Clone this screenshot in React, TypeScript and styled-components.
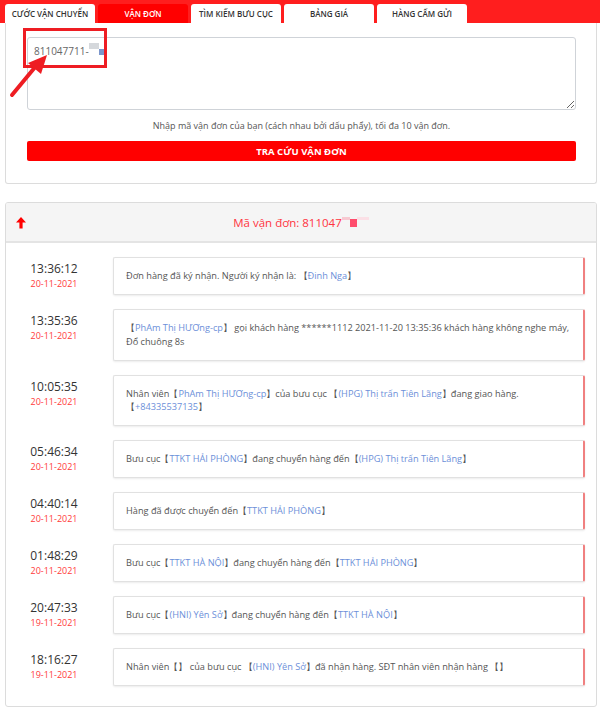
import styled, { createGlobalStyle } from 'styled-components'

const GlobalStyle = createGlobalStyle`
    body {
        margin: 0;
        background: #fff;
        font-family: 'Open Sans', 'Liberation Sans', sans-serif;
        color: #444;
    }
`

type Piece = string | { link: string }

interface TrackEvent {
    time: string
    date: string
    text: Piece[]
}

const TABS = ['Cước vận chuyển', 'Vận đơn', 'Tìm kiếm bưu cục', 'Bảng giá', 'Hàng cấm gửi']

const EVENTS: TrackEvent[] = [
    {
        time: '13:36:12',
        date: '20-11-2021',
        text: ['Đơn hàng đã ký nhận. Người ký nhận là: 【', { link: 'Đinh Nga' }, '】'],
    },
    {
        time: '13:35:36',
        date: '20-11-2021',
        text: [
            '【',
            { link: 'PhAm Thị HƯƠng-cp' },
            '】 gọi khách hàng ******1112 2021-11-20 13:35:36 khách hàng không nghe máy, Đổ chuông 8s',
        ],
    },
    {
        time: '10:05:35',
        date: '20-11-2021',
        text: [
            'Nhân viên【',
            { link: 'PhAm Thị HƯƠng-cp' },
            '】của bưu cục 【',
            { link: '(HPG) Thị trấn Tiên Lãng' },
            '】đang giao hàng. 【',
            { link: '+84335537135' },
            '】',
        ],
    },
    {
        time: '05:46:34',
        date: '20-11-2021',
        text: ['Bưu cục【', { link: 'TTKT HẢI PHÒNG' }, '】đang chuyển hàng đến【', { link: '(HPG) Thị trấn Tiên Lãng' }, '】'],
    },
    {
        time: '04:40:14',
        date: '20-11-2021',
        text: ['Hàng đã được chuyển đến【', { link: 'TTKT HẢI PHÒNG' }, '】'],
    },
    {
        time: '01:48:29',
        date: '20-11-2021',
        text: ['Bưu cục【', { link: 'TTKT HÀ NỘI' }, '】đang chuyển hàng đến【', { link: 'TTKT HẢI PHÒNG' }, '】'],
    },
    {
        time: '20:47:33',
        date: '19-11-2021',
        text: ['Bưu cục【', { link: '(HNI) Yên Sở' }, '】đang chuyển hàng đến【', { link: 'TTKT HÀ NỘI' }, '】'],
    },
    {
        time: '18:16:27',
        date: '19-11-2021',
        text: ['Nhân viên【】 của bưu cục 【', { link: '(HNI) Yên Sở' }, '】đã nhận hàng. SĐT nhân viên nhận hàng 【】'],
    },
]

const Page = styled.div`
    position: relative;
    width: 600px;
    padding-bottom: 10px;
`

const TabBar = styled.div`
    height: 23px;
    background: #ff1e1e;
    display: flex;
    align-items: flex-end;
    gap: 3px;
    padding-left: 5px;
    box-sizing: border-box;
`

const Tab = styled.div<{ $active?: boolean }>`
    width: 90px;
    height: 19px;
    border-radius: 3px 3px 0 0;
    background: ${(p) => (p.$active ? '#ff0000' : '#fff')};
    color: ${(p) => (p.$active ? '#fff' : '#333')};
    font-size: 8px;
    font-weight: 600;
    text-transform: uppercase;
    display: flex;
    align-items: center;
    justify-content: center;
`

const SearchPanel = styled.div`
    margin: 0 3px 0 5px;
    border: 1px solid #dcdcdc;
    border-top: none;
    border-radius: 0 0 3px 3px;
    padding: 14px 20px 22px 21px;
`

const InputBox = styled.div`
    height: 73px;
    box-sizing: border-box;
    border: 1px solid #cfd3d8;
    border-radius: 3px;
    padding: 5px 6px;
    font-size: 10px;
    color: #666;
    resize: vertical;
    overflow: auto;
`

const Redact = styled.span<{ $color: string; $w: number; $h: number; $lift?: number }>`
    display: inline-block;
    width: ${(p) => p.$w}px;
    height: ${(p) => p.$h}px;
    background: ${(p) => p.$color};
    vertical-align: ${(p) => p.$lift ?? 0}px;
`

const Hint = styled.div`
    text-align: center;
    font-size: 9px;
    line-height: 12px;
    color: #555;
    margin: 10px 0 9px;
`

const SearchButton = styled.button`
    display: block;
    width: 100%;
    height: 20px;
    border: none;
    border-radius: 2px;
    background: #ff0000;
    color: #fff;
    font-family: inherit;
    font-size: 9.5px;
    font-weight: 700;
    text-transform: uppercase;
`

const Highlight = styled.div`
    position: absolute;
    left: 23px;
    top: 28px;
    width: 84px;
    height: 40px;
    box-sizing: border-box;
    border: 3px solid #ee1d23;
`

const Pointer = styled.svg`
    position: absolute;
    left: 8px;
    top: 52px;
`

const TrackPanel = styled.div`
    margin: 18px 3px 0 5px;
    border: 1px solid #dcdcdc;
    border-radius: 3px;
    overflow: hidden;
`

const TrackHeader = styled.div`
    height: 40px;
    box-sizing: border-box;
    background: #f5f5f5;
    border-bottom: 2px solid #e4e4e4;
    display: grid;
    grid-template-columns: 30px 1fr 30px;
    align-items: center;
`

const UpArrow = styled.svg`
    justify-self: center;
`

const TrackTitle = styled.div`
    text-align: center;
    font-size: 11.5px;
    color: #ff3340;
`

const Timeline = styled.div`
    display: flex;
    flex-direction: column;
    gap: 14px;
    padding: 14px 11px 20px 0;
`

const EventRow = styled.div`
    display: grid;
    grid-template-columns: 96px 1fr;
    column-gap: 11px;
    align-items: start;
`

const When = styled.div`
    text-align: center;
    padding-top: 4px;
`

const Time = styled.div`
    font-size: 12px;
    font-weight: 500;
    color: #333;
    line-height: 15px;
`

const DateText = styled.div`
    font-size: 9px;
    color: #ff3b3b;
    margin-top: 1px;
`

const Card = styled.div`
    border: 1px solid #e1e1e1;
    border-right: 2px solid #f08080;
    border-radius: 2px;
    box-shadow: 0 1px 2px rgba(0, 0, 0, 0.08);
    padding: 11.25px 8px 11.25px 12px;
    font-size: 9.2px;
    line-height: 13.5px;
    color: #555;
`

const Link = styled.span`
    color: #6c8fd9;
`

export default function App() {
    return (
        <Page>
            <GlobalStyle />
            <TabBar>
                {TABS.map((t) => (
                    <Tab key={t} $active={t === 'Vận đơn'}>
                        {t}
                    </Tab>
                ))}
            </TabBar>
            <SearchPanel>
                <InputBox>
                    811047711-
                    <Redact $color="#d5d8dc" $w={10} $h={6} $lift={6} />
                    <Redact $color="#7b96cc" $w={6} $h={6} />
                </InputBox>
                <Hint>Nhập mã vận đơn của bạn (cách nhau bởi dấu phẩy), tối đa 10 vận đơn.</Hint>
                <SearchButton>Tra cứu vận đơn</SearchButton>
            </SearchPanel>

            <Highlight />
            <Pointer width="44" height="48" viewBox="0 0 44 48">
                <line x1="4" y1="43" x2="28" y2="14" stroke="#ee1d23" strokeWidth="4" strokeLinecap="round" />
                <polygon points="39,3 20,11 33,22" fill="#ee1d23" />
            </Pointer>

            <TrackPanel>
                <TrackHeader>
                    <UpArrow width="12" height="13" viewBox="0 0 12 13">
                        <path d="M6 1 L11 6.5 L7.6 6.5 L7.6 12.5 L4.4 12.5 L4.4 6.5 L1 6.5 Z" fill="#ff0000" />
                    </UpArrow>
                    <TrackTitle>
                        Mã vận đơn: 811047
                        <Redact $color="#f7c9d1" $w={8} $h={3} $lift={7} />
                        <Redact $color="#ff4d6d" $w={7} $h={8} />
                        <Redact $color="#fbe0e6" $w={12} $h={3} $lift={7} />
                    </TrackTitle>
                    <span />
                </TrackHeader>
                <Timeline>
                    {EVENTS.map((e) => (
                        <EventRow key={e.time}>
                            <When>
                                <Time>{e.time}</Time>
                                <DateText>{e.date}</DateText>
                            </When>
                            <Card>
                                {e.text.map((p, i) =>
                                    typeof p === 'string' ? <span key={i}>{p}</span> : <Link key={i}>{p.link}</Link>,
                                )}
                            </Card>
                        </EventRow>
                    ))}
                </Timeline>
            </TrackPanel>
        </Page>
    )
}
